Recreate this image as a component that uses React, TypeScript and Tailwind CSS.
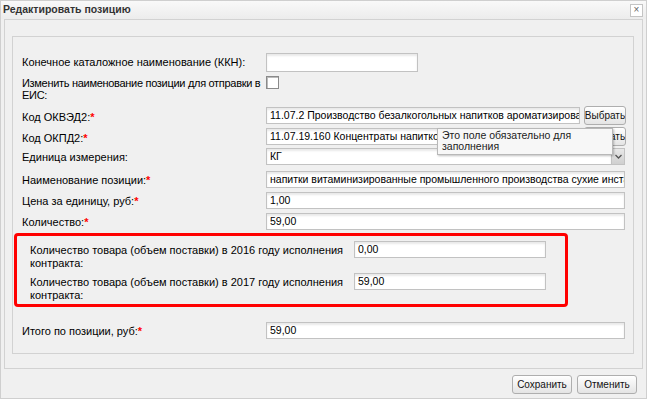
const font = "font-['Liberation_Sans','DejaVu_Sans',sans-serif]";

function Star() {
    return <span className="text-[#ff0000] font-bold">*</span>;
}

function Field({ value = "", w = "w-[359px]", h = "h-[17px]" }: { value?: string; w?: string; h?: string }) {
    return (
        <div
            className={`${w} ${h} shrink-0 overflow-hidden whitespace-nowrap border border-[#c2c2c2] bg-white pl-[3px] text-[10.5px] leading-[15px] text-black shadow-[inset_0_2px_2px_rgba(0,0,0,0.09)]`}
        >
            {value}
        </div>
    );
}

function Btn({ label, w }: { label: string; w: string }) {
    return (
        <div
            className={`${w} flex h-[19px] shrink-0 items-center justify-center overflow-hidden whitespace-nowrap rounded-[3px] border border-[#aeaeae] bg-gradient-to-b from-white to-[#e4e4e4] text-[10px] text-[#111]`}
        >
            {label}
        </div>
    );
}

function Row({ label, children, mt }: { label: React.ReactNode; children: React.ReactNode; mt: string }) {
    return (
        <div className={`${mt} flex h-[17px] items-center pl-[9px]`}>
            <div className="w-[244px] shrink-0 whitespace-nowrap pt-[2px] text-[11px] leading-[13px] text-black">{label}</div>
            {children}
        </div>
    );
}

export default function App() {
    return (
        <div className={`${font} flex h-[399px] w-[647px] flex-col border border-[#cfcfcf] bg-[#f0f0f0]`}>
            {/* title bar */}
            <div className="flex h-[18px] items-center justify-between bg-gradient-to-b from-[#f9f9f9] to-[#ececec] pl-[2px] pr-[3px]">
                <span className="text-[10.5px] font-bold text-[#333]">Редактировать позицию</span>
                <div className="flex h-[13px] w-[13px] items-center justify-center border border-[#c4c4c4] bg-white text-[10px] leading-none text-[#666]">
                    ×
                </div>
            </div>

            {/* outer panel */}
            <div className="mx-[3px] flex h-[350px] w-[639px] flex-col border border-[#d2d2d2] pl-[7px] pr-[8px] pt-[16px]">
                {/* inner fieldset */}
                <div className="flex h-[318px] w-[622px] flex-col border border-[#d2d2d2]">
                    <div className="mt-[16px] flex h-[19px] items-center pl-[9px]">
                        <div className="w-[244px] shrink-0 whitespace-nowrap text-[11px] leading-[13px]">Конечное каталожное наименование (ККН):</div>
                        <Field w="w-[152px]" h="h-[19px]" />
                    </div>

                    <div className="mt-[4px] flex h-[26px] items-start pl-[9px]">
                        <div className="w-[244px] shrink-0 whitespace-nowrap pt-[1px] text-[11px] leading-[12px] tracking-[-0.3px]">
                            Изменить наименование позиции для отправки в
                            <br />
                            ЕИС:
                        </div>
                        <div className="h-[13px] w-[13px] shrink-0 border border-[#8a8a8a] bg-white shadow-[inset_1px_1px_0_#bbb]" />
                    </div>

                    <div className="mt-[4px] flex h-[19px] items-center pl-[9px]">
                        <div className="w-[244px] shrink-0 whitespace-nowrap pt-[3px] text-[11px] leading-[13px]">
                            Код ОКВЭД2:<Star />
                        </div>
                        <Field w="w-[314px]" value="11.07.2 Производство безалкогольных напитков ароматизированных и/или подслащенных" />
                        <div className="ml-[4px]">
                            <Btn label="Выбрать" w="w-[42px]" />
                        </div>
                    </div>

                    <div className="relative mt-[2px] flex h-[19px] items-center pl-[9px]">
                        <div className="w-[244px] shrink-0 whitespace-nowrap pt-[3px] text-[11px] leading-[13px]">
                            Код ОКПД2:<Star />
                        </div>
                        <Field w="w-[314px]" value="11.07.19.160 Концентраты напитков" />
                        <div className="ml-[4px]">
                            <Btn label="Выбрать" w="w-[42px]" />
                        </div>
                        <div className="absolute left-[424px] top-[1px] z-10 h-[27px] w-[176px] border border-[#b8b8b8] bg-[#f7f7f7] pl-[4px] pt-[1px] text-[10.5px] leading-[11px] text-[#222] shadow-[1px_1px_2px_rgba(0,0,0,0.25)]">
                            Это поле обязательно для
                            <br />
                            заполнения
                        </div>
                    </div>

                    <Row mt="mt-[2px]" label="Единица измерения:">
                        <div className="flex h-[17px] w-[359px] shrink-0">
                            <Field w="w-[346px]" value="КГ" />
                            <div className="flex h-[17px] w-[13px] items-center justify-center border-y border-r border-[#c2c2c2] bg-gradient-to-b from-[#e8e8e8] to-[#cfcfcf]">
                                <svg width="7" height="5" viewBox="0 0 7 5">
                                    <path d="M0.5 1 L3.5 4 L6.5 1" stroke="#555" strokeWidth="1.3" fill="none" />
                                </svg>
                            </div>
                        </div>
                    </Row>

                    <Row mt="mt-[6px]" label={<>Наименование позиции:<Star /></>}>
                        <Field value="напитки витаминизированные промышленного производства сухие инстантные" />
                    </Row>
                    <Row mt="mt-[4px]" label={<>Цена за единицу, руб:<Star /></>}>
                        <Field value="1,00" />
                    </Row>
                    <Row mt="mt-[4px]" label={<>Количество:<Star /></>}>
                        <Field value="59,00" />
                    </Row>

                    {/* highlighted block */}
                    <div className="ml-[1px] mt-[3px] flex h-[74px] w-[554px] flex-col rounded-[4px] border-[3px] border-[#ff0000] pl-[13px] pt-[5px]">
                        <div className="flex items-start">
                            <div className="w-[324px] shrink-0 whitespace-nowrap pt-[3px] text-[11px] leading-[13px]">
                                Количество товара (объем поставки) в 2016 году исполнения
                                <br />
                                контракта:
                            </div>
                            <Field w="w-[192px]" value="0,00" />
                        </div>
                        <div className="mt-[3px] flex items-start">
                            <div className="w-[324px] shrink-0 whitespace-nowrap pt-[3px] text-[11px] leading-[13px]">
                                Количество товара (объем поставки) в 2017 году исполнения
                                <br />
                                контракта:
                            </div>
                            <Field w="w-[192px]" value="59,00" />
                        </div>
                    </div>

                    <Row mt="mt-[15px]" label={<>Итого по позиции, руб:<Star /></>}>
                        <Field value="59,00" />
                    </Row>
                </div>
            </div>

            {/* footer */}
            <div className="mt-[6px] flex justify-end gap-[5px] pr-[9px]">
                <Btn label="Сохранить" w="w-[60px]" />
                <Btn label="Отменить" w="w-[60px]" />
            </div>
        </div>
    );
}
